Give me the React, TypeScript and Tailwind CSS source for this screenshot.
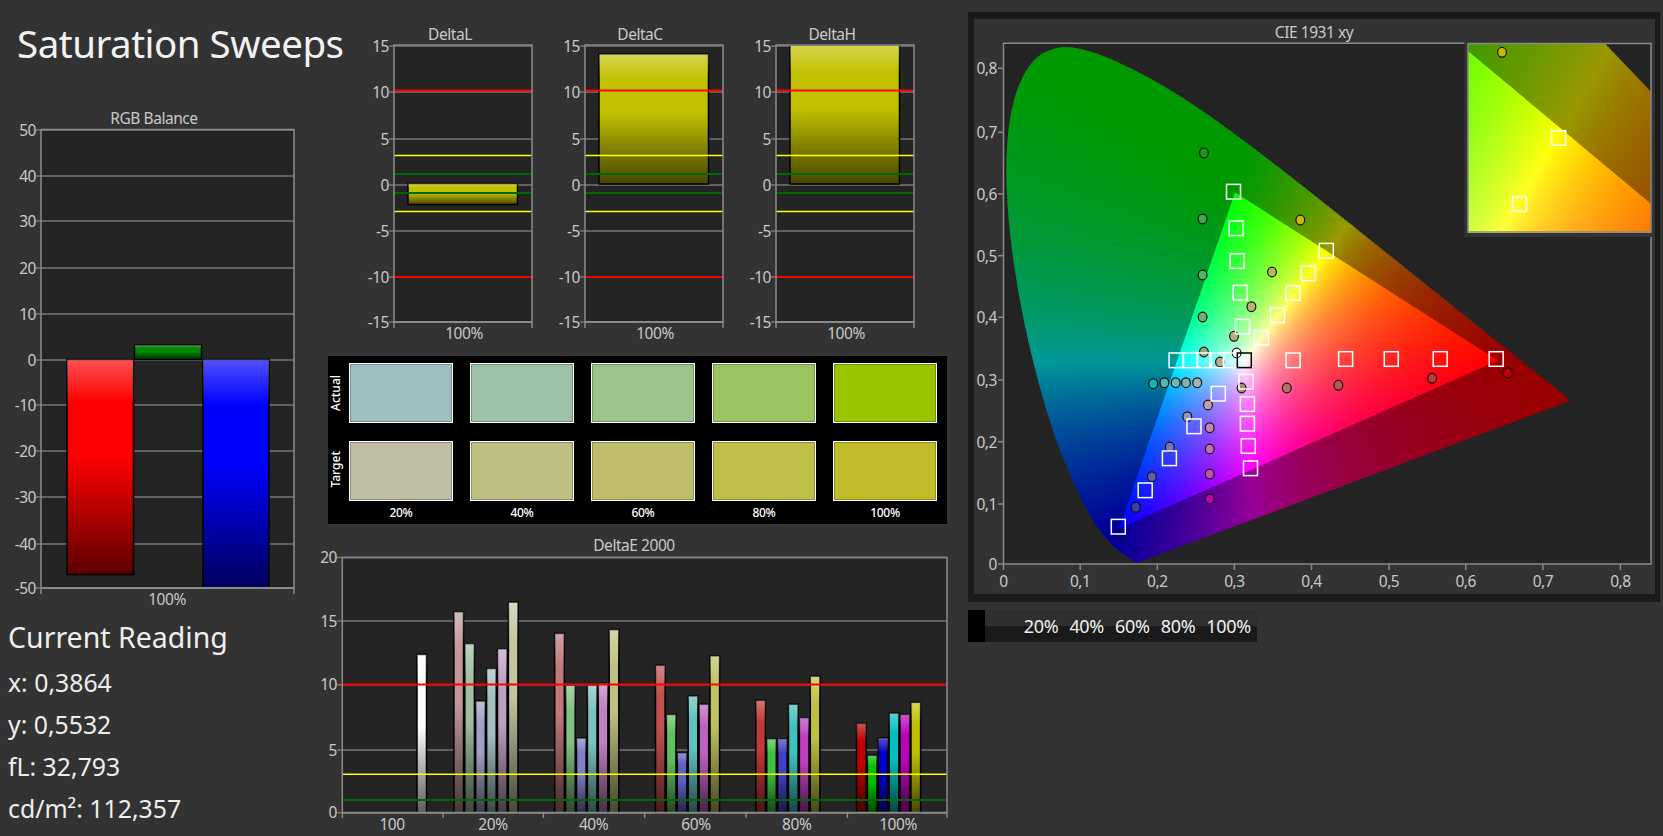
import { useMemo } from "react";

type Pt = [number, number];

const LABEL = "#c9c9c9";
const GRID = "#777777";
const FRAME = "#8a8a8a";

const LOCUS_RAW: Pt[] = [
  [0.1741, 0.005], [0.1714, 0.0051], [0.1644, 0.0109], [0.1566, 0.0177], [0.144, 0.0297], [0.1241, 0.0578],
  [0.1096, 0.0868], [0.0913, 0.1327], [0.0687, 0.2007], [0.0454, 0.295], [0.0235, 0.4127], [0.0082, 0.5384],
  [0.0039, 0.6548], [0.0139, 0.7502], [0.0389, 0.812], [0.0743, 0.8338], [0.1142, 0.8262], [0.1547, 0.8059],
  [0.1929, 0.7816], [0.2296, 0.7543], [0.2658, 0.7243], [0.3016, 0.6923], [0.3373, 0.6589], [0.3731, 0.6245],
  [0.4087, 0.5896], [0.4441, 0.5547], [0.4788, 0.5202], [0.5125, 0.4866], [0.5448, 0.4544], [0.5752, 0.4242],
  [0.6029, 0.3965], [0.627, 0.3725], [0.6658, 0.334], [0.6915, 0.3083], [0.726, 0.274], [0.7347, 0.2653],
];

// smooth the tabulated locus so the horseshoe has no visible corners
function spline(pts: Pt[], steps: number): Pt[] {
  const out: Pt[] = [];
  for (let i = 0; i < pts.length - 1; i++) {
    const p0 = pts[Math.max(i - 1, 0)];
    const p1 = pts[i];
    const p2 = pts[i + 1];
    const p3 = pts[Math.min(i + 2, pts.length - 1)];
    for (let s = 0; s < steps; s++) {
      const t = s / steps;
      const at = (k: 0 | 1) =>
        0.5 *
        (2 * p1[k] +
          (p2[k] - p0[k]) * t +
          (2 * p0[k] - 5 * p1[k] + 4 * p2[k] - p3[k]) * t * t +
          (3 * p1[k] - p0[k] - 3 * p2[k] + p3[k]) * t * t * t);
      out.push([at(0), at(1)]);
    }
  }
  out.push(pts[pts.length - 1]);
  return out;
}

const LOCUS = spline(LOCUS_RAW, 5);
const GAMUT: Pt[] = [[0.64, 0.33], [0.3, 0.6], [0.15, 0.06]];

const SQUARES: Pt[] = [
  [1233.5, 191.7], [1236.2, 228.3], [1237.1, 261], [1240.2, 292.7], [1326.3, 250.7], [1308.4, 273.3], [1293.1, 293],
  [1277.4, 315.3], [1242.5, 326.7], [1261.3, 337.7], [1176.1, 360.3], [1190.5, 360.3], [1204.4, 360.3], [1216.9, 360.3],
  [1230.4, 360.3], [1293.1, 360.3], [1345.6, 359], [1391.3, 359], [1440.2, 359], [1496.2, 359], [1246, 381.7],
  [1218.3, 393.7], [1247.4, 404], [1247.4, 423.7], [1194, 426.3], [1248.3, 446], [1169.4, 458.3], [1250.5, 468.3],
  [1145.2, 490.3], [1118.3, 526.7],
];

const DOTS: [number, number, string][] = [
  [1203.9, 153, "#1a9a1a"], [1202.6, 219, "#40a850"], [1300.3, 220, "#c8b800"], [1202.6, 275, "#5aaf68"],
  [1272, 272, "#b8b850"], [1234, 336.3, "#b0b080"], [1251.4, 306.7, "#b8b078"], [1202.6, 317, "#70b078"],
  [1203.9, 352, "#90a880"], [1236.6, 353, "#ffffff"], [1220, 362, "#b0b090"], [1153.2, 383.7, "#10b8b8"],
  [1164.4, 382.7, "#50b8b0"], [1175.7, 382.7, "#70b8b0"], [1186, 382.7, "#88b0b0"], [1197.2, 382.7, "#a0b8b0"],
  [1241.6, 388, "#b08878"], [1286.8, 388, "#b87060"], [1338.4, 385.3, "#b85858"], [1432.1, 378.3, "#c03838"],
  [1507.5, 372.7, "#c00000"], [1208, 405, "#c0a0b0"], [1187.3, 416.7, "#9898b8"], [1209.7, 427.7, "#c088b0"],
  [1169.8, 447, "#7878b8"], [1209.7, 449, "#c070b0"], [1151.9, 476.7, "#6060b0"], [1209.7, 474, "#c050b0"],
  [1135.8, 507.3, "#4040a8"], [1209.7, 499, "#c000b0"], [1121, 535.7, "#0000a0"],
];

const SWATCHES = [
  { label: "20%", actual: "bg-[#9cc0c2]", target: "bg-[#bfbea4]" },
  { label: "40%", actual: "bg-[#9cc2a8]", target: "bg-[#bfbf84]" },
  { label: "60%", actual: "bg-[#9cc48a]", target: "bg-[#bfbd6a]" },
  { label: "80%", actual: "bg-[#9cc562]", target: "bg-[#bfbf48]" },
  { label: "100%", actual: "bg-[#99c400]", target: "bg-[#c2bc2a]" },
];

const DELTA_E = [
  { start: 453.4, values: [15.75, 13.25, 8.75, 11.3, 12.85, 16.5], colors: ["#c09898", "#a0c0a0", "#a0a0c8", "#a0c0c0", "#c0a0c0", "#c4c4a0"] },
  { start: 554.2, values: [14.05, 10, 5.85, 10, 10.15, 14.35], colors: ["#c07878", "#80c080", "#8080c8", "#80c0c0", "#c080c0", "#c0c080"] },
  { start: 655, values: [11.55, 7.7, 4.7, 9.15, 8.5, 12.3], colors: ["#c05050", "#60c060", "#6060c8", "#60c0c0", "#c060c0", "#c0c060"] },
  { start: 755.3, values: [8.8, 5.8, 5.8, 8.5, 7.45, 10.7], colors: ["#c03838", "#40c040", "#4040c8", "#40c0c0", "#c040c0", "#c0c040"] },
  { start: 856, values: [7, 4.5, 5.85, 7.8, 7.7, 8.65], colors: ["#c00000", "#00c000", "#0000c8", "#00c0c0", "#c000c0", "#c0c000"] },
];

function inPoly(x: number, y: number, poly: Pt[]) {
  let inside = false;
  for (let i = 0, j = poly.length - 1; i < poly.length; j = i++) {
    const [xi, yi] = poly[i];
    const [xj, yj] = poly[j];
    if (yi > y !== yj > y && x < ((xj - xi) * (y - yi)) / (yj - yi) + xi) inside = !inside;
  }
  return inside;
}

function xyColor(x: number, y: number, dim: number) {
  const X = x / y;
  const Z = (1 - x - y) / y;
  const r = Math.max(0, 3.2406 * X - 1.5372 - 0.4986 * Z);
  const g = Math.max(0, -0.9689 * X + 1.8758 + 0.0415 * Z);
  const b = Math.max(0, 0.0557 * X - 0.204 + 1.057 * Z);
  const m = Math.max(r, g, b, 0.0001);
  return `rgb(${Math.round((r / m) * dim)},${Math.round((g / m) * dim)},${Math.round((b / m) * dim)})`;
}

function Sheen({ id }: { id: string }) {
  return (
    <linearGradient id={id} x1="0" y1="0" x2="0" y2="1">
      <stop offset="0" stopColor="#fff" stopOpacity="0.32" />
      <stop offset="0.2" stopColor="#fff" stopOpacity="0" />
      <stop offset="0.45" stopColor="#000" stopOpacity="0" />
      <stop offset="1" stopColor="#000" stopOpacity="0.64" />
    </linearGradient>
  );
}

function Bar({ x, y, w, h, fill, sheen, sw = 1.5 }: { x: number; y: number; w: number; h: number; fill: string; sheen: string; sw?: number }) {
  return (
    <g>
      <rect x={x} y={y} width={w} height={h} fill={fill} stroke="#000" strokeWidth={sw} />
      <rect x={x} y={y} width={w} height={h} fill={`url(#${sheen})`} />
    </g>
  );
}

function ChartText({ x, y, anchor = "middle", children }: { x: number; y: number; anchor?: "middle" | "end"; children: string }) {
  return (
    <text x={x} y={y} textAnchor={anchor} fontSize="15.5" letterSpacing="-0.45" fill={LABEL}>
      {children}
    </text>
  );
}

function RgbBalance() {
  const ticks: [string, number][] = [
    ["50", 130], ["40", 176], ["30", 221], ["20", 268], ["10", 314], ["0", 360],
    ["-10", 405], ["-20", 451], ["-30", 497], ["-40", 544], ["-50", 588],
  ];
  return (
    <svg width="315" height="505" viewBox="0 105 315 505" className="block">
      <defs>
        <Sheen id="rgb-sheen" />
      </defs>
      <rect x="41" y="129.5" width="253" height="458.5" fill="#242424" />
      {ticks.map(([t, y]) => (
        <g key={t}>
          <line x1="36" x2="294" y1={y} y2={y} stroke={GRID} strokeWidth="1.5" />
          <ChartText x={36} y={y + 5.5} anchor="end">{t}</ChartText>
        </g>
      ))}
      <Bar x={67} y={359.5} w={66.5} h={215} fill="#ff0000" sheen="rgb-sheen" />
      <Bar x={134.5} y={345} w={67} h={14.5} fill="#008800" sheen="rgb-sheen" />
      <Bar x={203} y={359.5} w={66} h={228.5} fill="#0000ff" sheen="rgb-sheen" />
      <path d="M41 594V129.5H294V594" fill="none" stroke={FRAME} strokeWidth="1.5" />
      <line x1="41" x2="294" y1="588" y2="588" stroke={FRAME} strokeWidth="2" />
      <ChartText x={154} y={124}>RGB Balance</ChartText>
      <ChartText x={167} y={605}>100%</ChartText>
    </svg>
  );
}

function DeltaChart({ title, titleX, barTop, barBottom }: { title: string; titleX: number; barTop: number; barBottom: number }) {
  const ticks: [string, number][] = [
    ["15", 46], ["10", 92], ["5", 139], ["0", 185], ["-5", 231], ["-10", 277], ["-15", 322],
  ];
  const sheen = `sheen-${title}`;
  return (
    <svg width="176" height="350" viewBox="0 0 176 350" className="block shrink-0">
      <defs>
        <Sheen id={sheen} />
      </defs>
      <rect x="31" y="45" width="138" height="277" fill="#242424" />
      {ticks.map(([t, y]) => (
        <g key={t}>
          <line x1="26" x2="169" y1={y} y2={y} stroke={GRID} strokeWidth="1.5" />
          <ChartText x={26} y={y + 5.5} anchor="end">{t}</ChartText>
        </g>
      ))}
      <Bar x={45} y={barTop} w={109.5} h={barBottom - barTop} fill="#c2c000" sheen={sheen} />
      <line x1="31" x2="169" y1="90.5" y2="90.5" stroke="#ff0000" strokeWidth="2" />
      <line x1="31" x2="169" y1="277" y2="277" stroke="#ff0000" strokeWidth="2" />
      <line x1="31" x2="169" y1="155.5" y2="155.5" stroke="#ffff00" strokeWidth="1.5" />
      <line x1="31" x2="169" y1="211.5" y2="211.5" stroke="#ffff00" strokeWidth="1.5" />
      <line x1="31" x2="169" y1="174" y2="174" stroke="#006a00" strokeWidth="2" />
      <line x1="31" x2="169" y1="193" y2="193" stroke="#006a00" strokeWidth="2" />
      <path d="M31 328V45H169V328" fill="none" stroke={FRAME} strokeWidth="1.5" />
      <line x1="31" x2="169" y1="322" y2="322" stroke={FRAME} strokeWidth="2" />
      <ChartText x={titleX} y={40}>{title}</ChartText>
      <ChartText x={101} y={339}>100%</ChartText>
    </svg>
  );
}

function SwatchPanel() {
  return (
    <div className="mt-[6px] ml-[13px] flex h-[168px] w-[619px] bg-black pt-[7px]">
      <div className="flex w-[21px] flex-col gap-[16px] pr-[6px]">
        {["Actual", "Target"].map((t) => (
          <div key={t} className="flex h-[60px] items-center justify-center">
            <span className="rotate-180 text-[12px] leading-none font-medium text-white [writing-mode:vertical-rl]">{t}</span>
          </div>
        ))}
      </div>
      <div className="grid w-[588px] grid-cols-5 gap-x-[17px] gap-y-[16px]">
        {SWATCHES.map((s) => (
          <div key={s.label} className={`h-[60px] border border-white shadow-[inset_0_0_0_1px_rgba(0,0,0,0.25)] ${s.actual}`} />
        ))}
        {SWATCHES.map((s) => (
          <div key={s.label} className={`h-[60px] border border-white shadow-[inset_0_0_0_1px_rgba(0,0,0,0.25)] ${s.target}`} />
        ))}
        {SWATCHES.map((s) => (
          <div key={s.label} className="-mt-[15px] text-center text-[12px] leading-[18px] font-medium tracking-[-0.3px] text-white">{s.label}</div>
        ))}
      </div>
    </div>
  );
}

function DeltaE() {
  const ticks: [string, number][] = [["20", 557.5], ["15", 621], ["10", 684.7], ["5", 750], ["0", 812.7]];
  const xTicks = [342.3, 443, 543.4, 644.6, 746, 847.3, 947];
  const xLabels: [string, number][] = [["100", 392], ["20%", 493], ["40%", 593.6], ["60%", 696], ["80%", 796.7], ["100%", 898]];
  const scale = 12.76;
  return (
    <svg width="645" height="306" viewBox="315 530 645 306" className="mt-[6px] block">
      <defs>
        <Sheen id="de-sheen" />
      </defs>
      <rect x="342.3" y="557.5" width="604.7" height="255.2" fill="#242424" />
      {ticks.map(([t, y]) => (
        <g key={t}>
          <line x1="337" x2="947" y1={y} y2={y} stroke={GRID} strokeWidth="1.5" />
          <ChartText x={337} y={y + 5.5} anchor="end">{t}</ChartText>
        </g>
      ))}
      <Bar x={417} y={812.7 - 12.4 * scale} w={9.5} h={12.4 * scale} fill="#ffffff" sheen="de-sheen" />
      {DELTA_E.map((g) =>
        g.values.map((v, i) => (
          <Bar key={`${g.start}-${i}`} x={g.start + 0.5 + i * 10.9} y={812.7 - v * scale} w={9.6} h={v * scale} fill={g.colors[i]} sheen="de-sheen" />
        )),
      )}
      <line x1="342.3" x2="947" y1="684.5" y2="684.5" stroke="#ff0000" strokeWidth="2" />
      <line x1="342.3" x2="947" y1="774.3" y2="774.3" stroke="#ffff00" strokeWidth="1.5" />
      <line x1="342.3" x2="947" y1="800" y2="800" stroke="#006a00" strokeWidth="2" />
      <path d="M342.3 812.7V557.5H947V812.7" fill="none" stroke={FRAME} strokeWidth="1.5" />
      <line x1="342.3" x2="947" y1="812.7" y2="812.7" stroke={FRAME} strokeWidth="2" />
      {xTicks.map((x) => (
        <line key={x} x1={x} x2={x} y1="812.7" y2="818" stroke={FRAME} strokeWidth="1.5" />
      ))}
      {xLabels.map(([t, x]) => (
        <ChartText key={t} x={x} y={829.5}>{t}</ChartText>
      ))}
      <ChartText x={634} y={551}>DeltaE 2000</ChartText>
    </svg>
  );
}

type Mapping = { x0: number; xs: number; y0: number; ys: number; left: number; top: number; right: number; bottom: number };

function GamutFill({ id, map, outerStep, innerStep }: { id: string; map: Mapping; outerStep: number; innerStep: number }) {
  const { outer, inner } = useMemo(() => {
    const outer: { x: number; y: number; c: string }[] = [];
    const inner: { x: number; y: number; c: string }[] = [];
    const toXy = (px: number, py: number): Pt => [(px - map.x0) / map.xs, (map.y0 - py) / map.ys];
    for (let py = map.top; py < map.bottom; py += outerStep) {
      for (let px = map.left; px < map.right; px += outerStep) {
        const corners = [toXy(px, py), toXy(px + outerStep, py), toXy(px, py + outerStep), toXy(px + outerStep, py + outerStep)];
        if (!corners.some(([a, b]) => inPoly(a, b, LOCUS))) continue;
        if (corners.every(([a, b]) => inPoly(a, b, GAMUT))) continue;
        const [a, b] = toXy(px + outerStep / 2, py + outerStep / 2);
        outer.push({ x: px, y: py, c: xyColor(a, Math.max(b, 0.002), 153) });
      }
    }
    for (let py = map.top; py < map.bottom; py += innerStep) {
      for (let px = map.left; px < map.right; px += innerStep) {
        const corners = [toXy(px, py), toXy(px + innerStep, py), toXy(px, py + innerStep), toXy(px + innerStep, py + innerStep)];
        if (!corners.some(([a, b]) => inPoly(a, b, GAMUT))) continue;
        const [a, b] = toXy(px + innerStep / 2, py + innerStep / 2);
        inner.push({ x: px, y: py, c: xyColor(a, b, 255) });
      }
    }
    return { outer, inner };
  }, [map, outerStep, innerStep]);

  const line = (pts: Pt[]) => pts.map(([x, y]) => `${map.x0 + map.xs * x},${map.y0 - map.ys * y}`).join(" ");

  return (
    <g>
      <defs>
        <clipPath id={`${id}-locus`}>
          <polygon points={line(LOCUS)} />
        </clipPath>
        <clipPath id={`${id}-gamut`}>
          <polygon points={line(GAMUT)} />
        </clipPath>
      </defs>
      <g clipPath={`url(#${id}-locus)`}>
        <g shapeRendering="crispEdges">
          {outer.map((c) => (
            <rect key={`${c.x}-${c.y}`} x={c.x} y={c.y} width={outerStep + 0.5} height={outerStep + 0.5} fill={c.c} />
          ))}
        </g>
      </g>
      <g clipPath={`url(#${id}-gamut)`}>
        <g shapeRendering="crispEdges">
          {inner.map((c) => (
            <rect key={`${c.x}-${c.y}`} x={c.x} y={c.y} width={innerStep + 0.5} height={innerStep + 0.5} fill={c.c} />
          ))}
        </g>
      </g>
    </g>
  );
}

const MAIN_MAP: Mapping = { x0: 1003.5, xs: 772, y0: 565.5, ys: 621.5, left: 1004, top: 44, right: 1580, bottom: 564 };
const INSET_MAP: Mapping = { x0: 855.1, xs: 1683, y0: 1023.5, ys: 1771, left: 1468, top: 43, right: 1652, bottom: 233 };

function Square({ x, y, color = "#ffffff" }: { x: number; y: number; color?: string }) {
  return <rect x={x - 7} y={y - 7.3} width="14" height="14.6" fill="none" stroke={color} strokeWidth="1.5" />;
}

function Dot({ x, y, fill }: { x: number; y: number; fill: string }) {
  return <ellipse cx={x} cy={y} rx="4.4" ry="4.9" fill={fill} stroke="#111111" strokeWidth="1.2" />;
}

function CieChart() {
  const xs = [0, 0.1, 0.2, 0.3, 0.4, 0.5, 0.6, 0.7, 0.8];
  const xPos = [1003.5, 1080.2, 1157.3, 1234.4, 1311.5, 1389, 1465.7, 1542.9, 1620.4];
  const ys: [string, number][] = [["0,8", 68.3], ["0,7", 132.3], ["0,6", 194], ["0,5", 255.7], ["0,4", 317.3], ["0,3", 380], ["0,2", 441.7], ["0,1", 504], ["0", 564]];
  return (
    <svg width="681" height="575" viewBox="974 19 681 575" className="block bg-[#333333]">
      <ChartText x={1314} y={38}>CIE 1931 xy</ChartText>
      <rect x="1003.5" y="43.3" width="647.5" height="520.7" fill="#242424" />
      {ys.map(([t, y]) => (
        <g key={t}>
          <line x1="998" x2="1003.5" y1={y} y2={y} stroke={FRAME} strokeWidth="1.5" />
          <ChartText x={997} y={y + 6} anchor="end">{t}</ChartText>
        </g>
      ))}
      <GamutFill id="main" map={MAIN_MAP} outerStep={3} innerStep={2} />
      {DOTS.map(([x, y, c]) => (
        <Dot key={`${x}-${y}`} x={x} y={y} fill={c} />
      ))}
      {SQUARES.map(([x, y]) => (
        <Square key={`${x}-${y}`} x={x} y={y} />
      ))}
      <Square x={1244.3} y={360.3} color="#000000" />
      <path d="M1003.5 564V43.3H1651V564Z" fill="none" stroke={FRAME} strokeWidth="1.5" />
      {xs.map((v, i) => (
        <g key={v}>
          <line x1={xPos[i]} x2={xPos[i]} y1="564" y2="570" stroke={FRAME} strokeWidth="1.5" />
          <ChartText x={xPos[i]} y={587}>{v === 0 ? "0" : `0,${Math.round(v * 10)}`}</ChartText>
        </g>
      ))}
      <rect x="1464.4" y="42" width="190" height="195" fill="#333333" />
      <svg x="1468" y="43" width="183" height="190" viewBox="1468 43 183 190">
        <rect x="1468" y="43" width="183" height="190" fill="#242424" />
        <GamutFill id="inset" map={INSET_MAP} outerStep={2} innerStep={2} />
        <Dot x={1502} y={52.3} fill="#c8b800" />
        <Square x={1558.6} y={138} />
        <Square x={1519.5} y={204} />
      </svg>
      <rect x="1468" y="43.5" width="183" height="188.5" fill="none" stroke={FRAME} strokeWidth="1.5" />
    </svg>
  );
}

export default function App() {
  return (
    <div className="flex h-[836px] w-[1663px] overflow-hidden bg-[#333333] font-['Noto_Sans',sans-serif] text-[#eeeeee]">
      <div className="w-[315px] shrink-0">
        <h1 className="h-[105px] pt-[15px] pl-[17px] text-[38.5px] leading-[56px] font-normal tracking-[-0.5px] whitespace-nowrap text-[#f2f2f2]">Saturation Sweeps</h1>
        <RgbBalance />
        <div className="pl-[8px]">
          <div className="flex h-[51px] items-center pt-[3px] text-[28.5px]">Current Reading</div>
          <div className="h-[42px] text-[24.8px] leading-[42px]">x: 0,3864</div>
          <div className="h-[42px] text-[24.8px] leading-[42px]">y: 0,5532</div>
          <div className="h-[42px] text-[24.8px] leading-[42px]">fL: 32,793</div>
          <div className="h-[42px] text-[24.8px] leading-[42px]">cd/m²: 112,357</div>
        </div>
      </div>
      <div className="w-[645px] shrink-0">
        <div className="flex gap-[15px] pl-[48px]">
          <DeltaChart title="DeltaL" titleX={87} barTop={183.5} barBottom={204.5} />
          <DeltaChart title="DeltaC" titleX={86} barTop={54} barBottom={184} />
          <DeltaChart title="DeltaH" titleX={87} barTop={45} barBottom={184} />
        </div>
        <SwatchPanel />
        <DeltaE />
      </div>
      <div className="pt-[12px] pl-[8px]">
        <div className="h-[590px] w-[692px] bg-[#1a1a1a] pt-[7px] pl-[6px]">
          <CieChart />
        </div>
        <div className="mt-[8px] flex h-[32px] w-[289px] items-center bg-[linear-gradient(#2f2f2f_50%,#1a1a1a_50%)]">
          <div className="h-full w-[17px] bg-black" />
          <div className="ml-auto flex gap-[11px] pr-[6px] text-[18px] tracking-[-0.3px] text-[#f0f0f0]">
            <span>20%</span>
            <span>40%</span>
            <span>60%</span>
            <span>80%</span>
            <span>100%</span>
          </div>
        </div>
      </div>
    </div>
  );
}
